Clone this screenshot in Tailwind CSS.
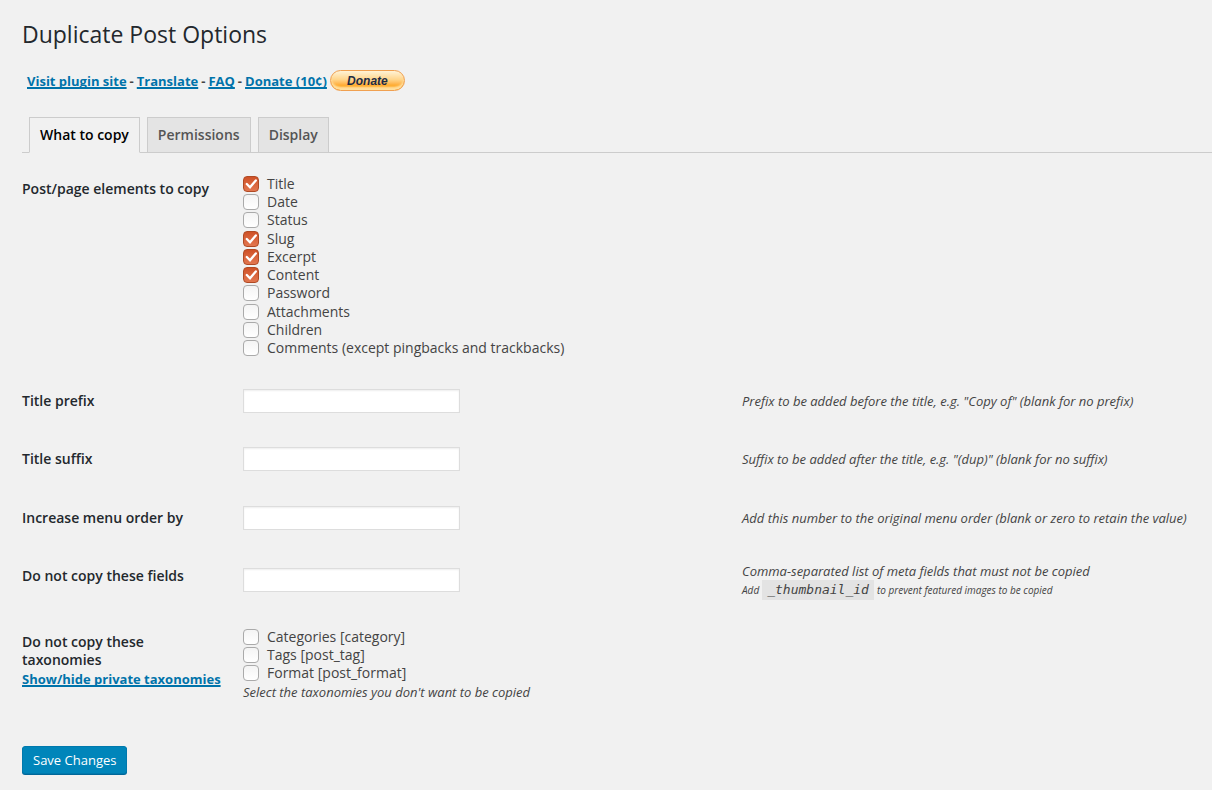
<!DOCTYPE html>
<html lang="en">
<head>
    <meta charset="UTF-8">
    <meta name="viewport" content="width=device-width, initial-scale=1.0">
    <title>Duplicate Post Options</title>
    <!-- TailwindCSS -->
    <script src="https://cdn.jsdelivr.net/npm/@tailwindcss/browser@4"></script>
</head>
<body class="min-h-screen bg-[#f1f1f1] font-['Open_Sans',sans-serif] text-[14px] leading-[18px] text-[#444]">
    <!-- Tick mark shared by the checkboxes -->
    <svg class="hidden">
        <symbol id="tick" viewBox="0 0 16 16">
            <path d="M3.8 8 L7 11.2 L12.8 4.4" fill="none" stroke="#fff" stroke-width="2.3" stroke-linecap="round" stroke-linejoin="miter"/>
        </symbol>
    </svg>

    <div class="pt-5 pb-4 pl-[22px]">
        <h1 class="text-[23px] leading-[29px] text-[#23282d]">Duplicate Post Options</h1>

        <!-- Plugin links -->
        <div class="mt-[21px] ml-[5px] flex items-center gap-[3px] text-[13px] font-bold">
            <a href="#" class="text-[#0073aa] underline decoration-2 underline-offset-1 [text-decoration-skip-ink:none]">Visit plugin site</a>
            <span>-</span>
            <a href="#" class="text-[#0073aa] underline decoration-2 underline-offset-1 [text-decoration-skip-ink:none]">Translate</a>
            <span>-</span>
            <a href="#" class="text-[#0073aa] underline decoration-2 underline-offset-1 [text-decoration-skip-ink:none]">FAQ</a>
            <span>-</span>
            <a href="#" class="text-[#0073aa] underline decoration-2 underline-offset-1 [text-decoration-skip-ink:none]">Donate (10¢)</a>
            <button type="button" class="h-[21px] w-[75px] rounded-full border border-[#f0a050] bg-linear-to-b from-[#fff3d6] via-[#ffd58a] via-45% to-[#ffab2e] to-75% font-['Liberation_Sans',sans-serif] text-[12px] leading-[18px] font-bold italic text-[#1c2b45] shadow-[inset_0_-3px_2px_#ffdf9e]">Donate</button>
        </div>

        <!-- Tabs -->
        <nav class="mt-[26px] flex gap-[7px] border-b border-[#ccc] pl-[7px] font-semibold">
            <a href="#" class="-mb-px border border-[#ccc] border-b-[#f1f1f1] px-[10px] py-[8px] text-black">What to copy</a>
            <a href="#" class="border border-b-0 border-[#ccc] bg-[#e4e4e4] px-[10px] py-[8px] text-[#555]">Permissions</a>
            <a href="#" class="border border-b-0 border-[#ccc] bg-[#e4e4e4] px-[10px] py-[8px] text-[#555]">Display</a>
        </nav>

        <!-- Options -->
        <form class="pt-[7px]">
            <div class="grid grid-cols-[221px_499px_1fr]" role="group" aria-labelledby="elementsLabel">
                <div id="elementsLabel" class="py-5 font-semibold text-[#23282d]">Post/page elements to copy</div>
                <div class="flex min-h-[212px] flex-col items-start justify-between py-[15px]">
                    <label class="flex items-center gap-2">
                        <span class="grid">
                            <input type="checkbox" name="title" checked class="peer col-start-1 row-start-1 size-4 appearance-none rounded-[4px] border border-[#aaa] bg-linear-to-b from-[#f4f4f4] to-white checked:border-[#b04a24] checked:from-[#cf5126] checked:to-[#e2764f]">
                            <svg class="pointer-events-none invisible col-start-1 row-start-1 size-4 peer-checked:visible"><use href="#tick"/></svg>
                        </span>
                        Title
                    </label>
                    <label class="flex items-center gap-2">
                        <span class="grid">
                            <input type="checkbox" name="date" class="peer col-start-1 row-start-1 size-4 appearance-none rounded-[4px] border border-[#aaa] bg-linear-to-b from-[#f4f4f4] to-white checked:border-[#b04a24] checked:from-[#cf5126] checked:to-[#e2764f]">
                            <svg class="pointer-events-none invisible col-start-1 row-start-1 size-4 peer-checked:visible"><use href="#tick"/></svg>
                        </span>
                        Date
                    </label>
                    <label class="flex items-center gap-2">
                        <span class="grid">
                            <input type="checkbox" name="status" class="peer col-start-1 row-start-1 size-4 appearance-none rounded-[4px] border border-[#aaa] bg-linear-to-b from-[#f4f4f4] to-white checked:border-[#b04a24] checked:from-[#cf5126] checked:to-[#e2764f]">
                            <svg class="pointer-events-none invisible col-start-1 row-start-1 size-4 peer-checked:visible"><use href="#tick"/></svg>
                        </span>
                        Status
                    </label>
                    <label class="flex items-center gap-2">
                        <span class="grid">
                            <input type="checkbox" name="slug" checked class="peer col-start-1 row-start-1 size-4 appearance-none rounded-[4px] border border-[#aaa] bg-linear-to-b from-[#f4f4f4] to-white checked:border-[#b04a24] checked:from-[#cf5126] checked:to-[#e2764f]">
                            <svg class="pointer-events-none invisible col-start-1 row-start-1 size-4 peer-checked:visible"><use href="#tick"/></svg>
                        </span>
                        Slug
                    </label>
                    <label class="flex items-center gap-2">
                        <span class="grid">
                            <input type="checkbox" name="excerpt" checked class="peer col-start-1 row-start-1 size-4 appearance-none rounded-[4px] border border-[#aaa] bg-linear-to-b from-[#f4f4f4] to-white checked:border-[#b04a24] checked:from-[#cf5126] checked:to-[#e2764f]">
                            <svg class="pointer-events-none invisible col-start-1 row-start-1 size-4 peer-checked:visible"><use href="#tick"/></svg>
                        </span>
                        Excerpt
                    </label>
                    <label class="flex items-center gap-2">
                        <span class="grid">
                            <input type="checkbox" name="content" checked class="peer col-start-1 row-start-1 size-4 appearance-none rounded-[4px] border border-[#aaa] bg-linear-to-b from-[#f4f4f4] to-white checked:border-[#b04a24] checked:from-[#cf5126] checked:to-[#e2764f]">
                            <svg class="pointer-events-none invisible col-start-1 row-start-1 size-4 peer-checked:visible"><use href="#tick"/></svg>
                        </span>
                        Content
                    </label>
                    <label class="flex items-center gap-2">
                        <span class="grid">
                            <input type="checkbox" name="password" class="peer col-start-1 row-start-1 size-4 appearance-none rounded-[4px] border border-[#aaa] bg-linear-to-b from-[#f4f4f4] to-white checked:border-[#b04a24] checked:from-[#cf5126] checked:to-[#e2764f]">
                            <svg class="pointer-events-none invisible col-start-1 row-start-1 size-4 peer-checked:visible"><use href="#tick"/></svg>
                        </span>
                        Password
                    </label>
                    <label class="flex items-center gap-2">
                        <span class="grid">
                            <input type="checkbox" name="attachments" class="peer col-start-1 row-start-1 size-4 appearance-none rounded-[4px] border border-[#aaa] bg-linear-to-b from-[#f4f4f4] to-white checked:border-[#b04a24] checked:from-[#cf5126] checked:to-[#e2764f]">
                            <svg class="pointer-events-none invisible col-start-1 row-start-1 size-4 peer-checked:visible"><use href="#tick"/></svg>
                        </span>
                        Attachments
                    </label>
                    <label class="flex items-center gap-2">
                        <span class="grid">
                            <input type="checkbox" name="children" class="peer col-start-1 row-start-1 size-4 appearance-none rounded-[4px] border border-[#aaa] bg-linear-to-b from-[#f4f4f4] to-white checked:border-[#b04a24] checked:from-[#cf5126] checked:to-[#e2764f]">
                            <svg class="pointer-events-none invisible col-start-1 row-start-1 size-4 peer-checked:visible"><use href="#tick"/></svg>
                        </span>
                        Children
                    </label>
                    <label class="flex items-center gap-2">
                        <span class="grid">
                            <input type="checkbox" name="comments" class="peer col-start-1 row-start-1 size-4 appearance-none rounded-[4px] border border-[#aaa] bg-linear-to-b from-[#f4f4f4] to-white checked:border-[#b04a24] checked:from-[#cf5126] checked:to-[#e2764f]">
                            <svg class="pointer-events-none invisible col-start-1 row-start-1 size-4 peer-checked:visible"><use href="#tick"/></svg>
                        </span>
                        Comments (except pingbacks and trackbacks)
                    </label>
                </div>
            </div>

            <div class="grid grid-cols-[221px_499px_1fr] items-center">
                <label for="titlePrefix" class="py-5 font-semibold text-[#23282d]">Title prefix</label>
                <input id="titlePrefix" type="text" class="h-6 w-[217px] border border-[#ddd] bg-white px-1 shadow-[inset_0_1px_2px_rgba(0,0,0,0.07)]">
                <p class="text-[13px] italic">Prefix to be added before the title, e.g. "Copy of" (blank for no prefix)</p>
            </div>

            <div class="grid grid-cols-[221px_499px_1fr] items-center">
                <label for="titleSuffix" class="py-5 font-semibold text-[#23282d]">Title suffix</label>
                <input id="titleSuffix" type="text" class="h-6 w-[217px] border border-[#ddd] bg-white px-1 shadow-[inset_0_1px_2px_rgba(0,0,0,0.07)]">
                <p class="text-[13px] italic">Suffix to be added after the title, e.g. "(dup)" (blank for no suffix)</p>
            </div>

            <div class="mt-px grid grid-cols-[221px_499px_1fr] items-center">
                <label for="menuOrder" class="py-5 font-semibold text-[#23282d]">Increase menu order by</label>
                <input id="menuOrder" type="text" class="h-6 w-[217px] border border-[#ddd] bg-white px-1 shadow-[inset_0_1px_2px_rgba(0,0,0,0.07)]">
                <p class="text-[13px] italic">Add this number to the original menu order (blank or zero to retain the value)</p>
            </div>

            <div class="grid grid-cols-[221px_499px_1fr] items-center">
                <label for="blacklist" class="self-start py-5 font-semibold text-[#23282d]">Do not copy these fields</label>
                <input id="blacklist" type="text" class="h-6 w-[217px] border border-[#ddd] bg-white px-1 shadow-[inset_0_1px_2px_rgba(0,0,0,0.07)]">
                <div class="pt-[15px] pb-[13px] text-[13px] italic">
                    <p>Comma-separated list of meta fields that must not be copied</p>
                    <p class="flex items-center gap-[3px] text-[10px] leading-5">
                        Add
                        <code class="bg-[#e3e3e3] px-[5px] font-['DejaVu_Sans_Mono',monospace] text-[13px]">_thumbnail_id</code>
                        to prevent featured images to be copied
                    </p>
                </div>
            </div>

            <div class="grid grid-cols-[221px_499px_1fr]" role="group" aria-labelledby="taxonomiesLabel">
                <div class="py-5 font-semibold text-[#23282d]">
                    <div id="taxonomiesLabel" class="w-[150px]">Do not copy these taxonomies</div>
                    <a href="#" class="text-[13px] leading-5 font-bold whitespace-nowrap text-[#0073aa] underline decoration-2 underline-offset-1 [text-decoration-skip-ink:none]">Show/hide private taxonomies</a>
                </div>
                <div class="flex flex-col items-start py-[15px]">
                    <label class="flex items-center gap-2">
                        <span class="grid">
                            <input type="checkbox" name="category" class="peer col-start-1 row-start-1 size-4 appearance-none rounded-[4px] border border-[#aaa] bg-linear-to-b from-[#f4f4f4] to-white checked:border-[#b04a24] checked:from-[#cf5126] checked:to-[#e2764f]">
                            <svg class="pointer-events-none invisible col-start-1 row-start-1 size-4 peer-checked:visible"><use href="#tick"/></svg>
                        </span>
                        Categories [category]
                    </label>
                    <label class="flex items-center gap-2">
                        <span class="grid">
                            <input type="checkbox" name="post_tag" class="peer col-start-1 row-start-1 size-4 appearance-none rounded-[4px] border border-[#aaa] bg-linear-to-b from-[#f4f4f4] to-white checked:border-[#b04a24] checked:from-[#cf5126] checked:to-[#e2764f]">
                            <svg class="pointer-events-none invisible col-start-1 row-start-1 size-4 peer-checked:visible"><use href="#tick"/></svg>
                        </span>
                        Tags [post_tag]
                    </label>
                    <label class="flex items-center gap-2">
                        <span class="grid">
                            <input type="checkbox" name="post_format" class="peer col-start-1 row-start-1 size-4 appearance-none rounded-[4px] border border-[#aaa] bg-linear-to-b from-[#f4f4f4] to-white checked:border-[#b04a24] checked:from-[#cf5126] checked:to-[#e2764f]">
                            <svg class="pointer-events-none invisible col-start-1 row-start-1 size-4 peer-checked:visible"><use href="#tick"/></svg>
                        </span>
                        Format [post_format]
                    </label>
                    <p class="text-[13px] leading-5 italic">Select the taxonomies you don't want to be copied</p>
                </div>
            </div>

            <button type="submit" class="mt-[29px] h-7 rounded-[3px] border border-[#0079ad] bg-[#0085ba] px-[10px] text-[13px] leading-[26px] text-white shadow-[0_1px_0_#006799]">Save Changes</button>
        </form>
    </div>
</body>
</html>
